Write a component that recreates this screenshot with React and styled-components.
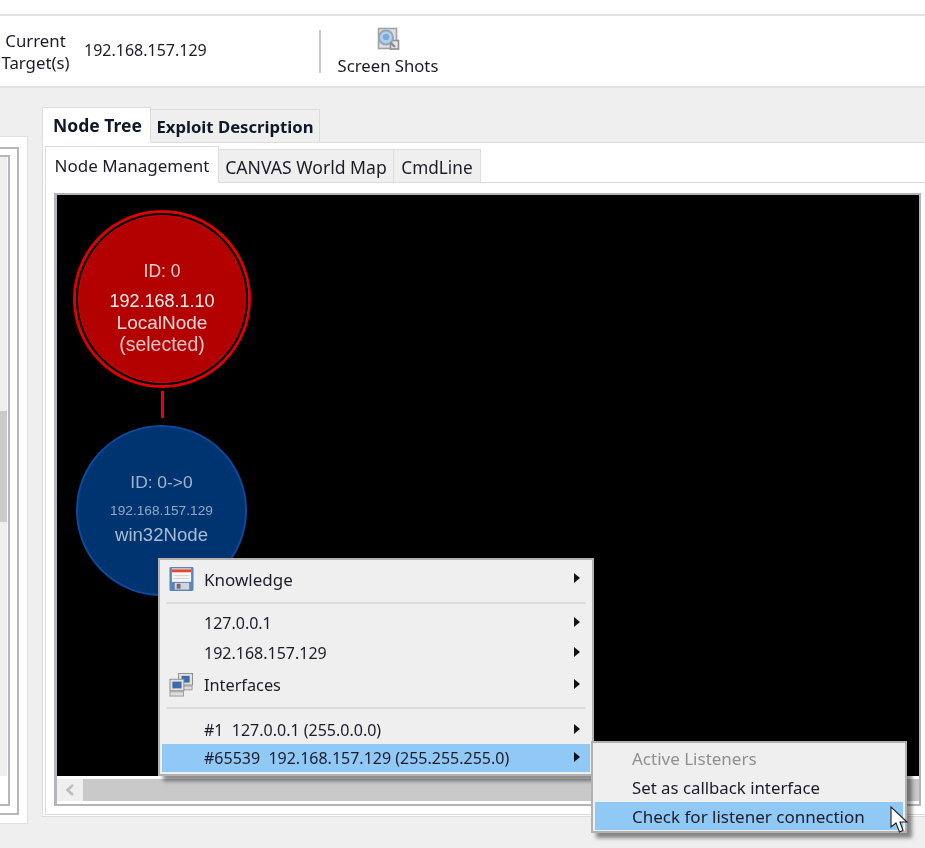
import styled, { createGlobalStyle } from 'styled-components'

const Global = createGlobalStyle`
  html, body { margin: 0; padding: 0; background: #efefef; }
  body { width: 925px; height: 848px; overflow: hidden; font-family: "Noto Sans", "Open Sans", sans-serif; color: #1c1c2a; }
`

const Page = styled.div`
  position: relative;
  width: 925px;
  height: 848px;
  overflow: hidden;
  background: #efefef;
  filter: blur(0.45px);
`
const TopStrip = styled.div`
  height: 14px;
  background: #fff;
  border-bottom: 2px solid #e3e3e3;
`
const Toolbar = styled.div`
  height: 70px;
  background: #fff;
  border-bottom: 2px solid #e3e3e3;
  display: flex;
  align-items: center;
  font-size: 16px;
`
const TargetLabel = styled.div`
  width: 71px;
  text-align: center;
  line-height: 22px;
  font-size: 16.8px;
  padding-top: 2px;
`
const TargetValue = styled.div`
  margin-left: 13px;
  width: 235px;
  margin-top: -2px;
`
const Divider = styled.div`
  width: 2px;
  height: 43px;
  background: #c9c9c9;
  margin-top: 1px;
`
const ToolButton = styled.div`
  margin-left: 15px;
  width: 104px;
  display: flex;
  flex-direction: column;
  align-items: center;
  gap: 3px;
  font-size: 16.7px;
  line-height: 24px;
  margin-top: 2px;
`
const Body = styled.div`
  display: flex;
  padding-top: 19px;
`
const LeftPanel = styled.div`
  box-sizing: border-box;
  flex-shrink: 0;
  width: 28px;
  height: 688px;
  margin-top: 29px;
  background: #fff;
  border: 1px solid #dfdfdf;
  border-left: 0;
  padding: 10px 8px 8px 0;
  display: flex;
`
const LeftBox = styled.div`
  flex: 1;
  display: flex;
  border: 2px solid #b7b7bd;
  border-left: 0;
  padding: ${p => p.$pad};
`
const SideScroll = styled.div`
  flex: 1;
  display: flex;
  flex-direction: column;
  background: #fff;
`
const SideTrack = styled.div`
  height: 619px;
  background: #efefef;
  padding-top: 254px;
  box-sizing: border-box;
`
const SideThumb = styled.div`
  height: 111px;
  background: #cacaca;
`
const RightPanel = styled.div`
  margin-left: 14px;
  width: 900px;
  flex-shrink: 0;
`
const MainTabs = styled.div`
  display: flex;
  align-items: flex-end;
  height: 36px;
  margin-bottom: -1px;
  position: relative;
`
const MainTab = styled.div`
  box-sizing: border-box;
  height: ${p => (p.$active ? 36 : 34)}px;
  width: ${p => p.$w}px;
  background: ${p => (p.$active ? '#fff' : '#efefef')};
  border: 1px solid #dcdcdc;
  border-bottom: ${p => (p.$active ? '1px solid #fff' : '1px solid #dcdcdc')};
  margin-right: -1px;
  position: relative;
  z-index: ${p => (p.$active ? 1 : 0)};
  display: flex;
  align-items: center;
  justify-content: center;
  padding-left: ${p => (p.$active ? 2 : 0)}px;
  font-size: ${p => p.$size}px;
  font-weight: 700;
  color: #101828;
`
const TabBody = styled.div`
  box-sizing: border-box;
  height: 675px;
  background: #fff;
  border: 1px solid #dcdcdc;
  padding: 3px 0 2px 2px;
`
const SubTabs = styled.div`
  display: flex;
  align-items: flex-end;
  height: 37px;
  margin-bottom: -1px;
  position: relative;
`
const SubTab = styled.div`
  box-sizing: border-box;
  height: ${p => (p.$active ? 37 : 34)}px;
  width: ${p => p.$w}px;
  background: ${p => (p.$active ? '#fff' : '#efefef')};
  border: 1px solid #dcdcdc;
  border-bottom: ${p => (p.$active ? '1px solid #fff' : '1px solid #dcdcdc')};
  margin-right: -1px;
  position: relative;
  z-index: ${p => (p.$active ? 1 : 0)};
  display: flex;
  align-items: center;
  justify-content: center;
  padding-top: 2px;
  font-size: ${p => p.$size}px;
`
const SubBody = styled.div`
  box-sizing: border-box;
  height: 633px;
  border: 1px solid #dcdcdc;
  padding: 10px 0 8px 8px;
`
const Frame = styled.div`
  box-sizing: border-box;
  width: 867px;
  height: 613px;
  border: 2px solid #b4b4bc;
  border-left-width: 3px;
  padding-bottom: 3px;
  background: #fff;
  display: flex;
  flex-direction: column;
`
const Canvas = styled.div`
  position: relative;
  height: 581px;
  background: #000;
  flex-shrink: 0;
`
const HScroll = styled.div`
  display: flex;
  margin-top: 3px;
  height: 22px;
`
const ScrollButton = styled.div`
  width: 26px;
  background: #efefef;
  display: flex;
  align-items: center;
  justify-content: center;
`
const ScrollTrack = styled.div`
  flex: 1;
  background: #c9c9c9;
`
const Node = styled.div`
  position: absolute;
  box-sizing: border-box;
  left: ${p => p.$x}px;
  top: ${p => p.$y}px;
  width: ${p => p.$d}px;
  height: ${p => p.$d}px;
  border-radius: 50%;
  background: ${p => p.$bg};
  border: ${p => p.$rw}px solid ${p => p.$ring};
  display: flex;
  flex-direction: column;
  align-items: center;
  font-family: "Liberation Sans", Arial, sans-serif;
  text-align: center;
`
const SelectedRing = styled.div`
  flex: 1;
  align-self: stretch;
  border-radius: 50%;
  border: 2px solid #000;
  display: flex;
  flex-direction: column;
  align-items: center;
`
const RingInner = styled.div`
  flex: 1;
  align-self: stretch;
  border-radius: 50%;
  border: 1px solid #d40000;
  background: #b30000;
  display: flex;
  flex-direction: column;
  align-items: center;
  padding-top: ${p => p.$top}px;
`
const NodeLine = styled.div`
  font-size: ${p => p.$size}px;
  line-height: ${p => p.$lh}px;
  margin-top: ${p => p.$mt || 0}px;
  color: ${p => p.$color};
  white-space: nowrap;
`
const Link = styled.div`
  position: absolute;
  left: 104px;
  top: 196px;
  width: 3px;
  height: 27px;
  background: #f00000;
`
const Menu = styled.div`
  position: absolute;
  box-sizing: border-box;
  left: ${p => p.$x}px;
  top: ${p => p.$y}px;
  width: ${p => p.$w}px;
  height: ${p => p.$h}px;
  background: #efefef;
  border: 2px solid #b2b2b2;
  box-shadow: 5px 5px 4px rgba(0, 0, 0, 0.45);
  padding: ${p => p.$pad};
  z-index: ${p => p.$z};
`
const Item = styled.div`
  position: relative;
  height: ${p => p.$h}px;
  padding-left: ${p => p.$left}px;
  display: flex;
  align-items: center;
  font-size: ${p => p.$size || 16}px;
  background: ${p => (p.$active ? '#90c8f6' : 'transparent')};
  color: ${p => (p.$muted ? '#8f8f8f' : '#1c1c2a')};
  white-space: pre;
`
const Arrow = styled.span`
  position: absolute;
  right: 10px;
  top: 50%;
  margin-top: -6px;
  width: 0;
  height: 0;
  border-left: 6px solid #111;
  border-top: 5.5px solid transparent;
  border-bottom: 5.5px solid transparent;
`
const ItemIcon = styled.span`
  position: absolute;
  left: 7px;
  top: 50%;
  transform: translateY(-50%);
  display: flex;
`
const Sep = styled.div`
  height: 2px;
  background: #dcdcdc;
  margin: ${p => p.$top}px 4px ${p => p.$bottom}px;
`
const Pointer = styled.svg`
  position: absolute;
  left: 890px;
  top: 806px;
  z-index: 5;
`

function ScreenShotIcon() {
  return (
    <svg width="24" height="24" viewBox="0 0 24 24">
      <rect x="2.5" y="1.5" width="18" height="20" fill="#dcdee2" stroke="#a2a2a2" strokeWidth="1.6" />
      <rect x="14.5" y="13.5" width="8" height="8.5" fill="#e6e6e6" stroke="#909090" strokeWidth="1.6" />
      <circle cx="10" cy="10.5" r="7" fill="#b4cfe9" stroke="#98a6b4" strokeWidth="2" />
      <circle cx="10" cy="10" r="3.2" fill="#78a8dc" />
      <path d="M14.5 15.5 L19 20" stroke="#868c94" strokeWidth="2.4" />
    </svg>
  )
}

function FloppyIcon() {
  return (
    <svg width="25" height="25" viewBox="0 0 26 26">
      <rect x="0.5" y="0.5" width="25" height="25" rx="1.5" fill="#5b84bd" />
      <rect x="3" y="2" width="20" height="14" fill="#f5f5f5" />
      <rect x="3" y="3" width="20" height="3" fill="#e8452f" />
      <rect x="5" y="9" width="16" height="1" fill="#cfcfcf" />
      <rect x="5" y="12" width="16" height="1" fill="#cfcfcf" />
      <rect x="6" y="17" width="15" height="7" fill="#d4d4d4" />
      <rect x="8" y="18" width="4" height="5" fill="#6c6c6c" />
    </svg>
  )
}

function NetworkIcon() {
  return (
    <svg width="25" height="25" viewBox="0 0 26 26">
      <rect x="10" y="1" width="14.5" height="12" fill="#e2e2e2" stroke="#8b8b8b" />
      <rect x="13" y="3.5" width="8.5" height="7" fill="#3e6aa5" />
      <rect x="11" y="14" width="13" height="4" fill="#dcdcdc" stroke="#9a9a9a" />
      <rect x="1" y="7" width="14.5" height="12" fill="#e2e2e2" stroke="#8b8b8b" />
      <rect x="3.5" y="9.5" width="9.5" height="7" fill="#3e6aa5" />
      <rect x="1" y="20" width="14" height="4.5" fill="#dcdcdc" stroke="#9a9a9a" />
    </svg>
  )
}

function App() {
  return (
    <Page>
      <Global />
      <TopStrip />
      <Toolbar>
        <TargetLabel>Current<br />Target(s)</TargetLabel>
        <TargetValue>192.168.157.129</TargetValue>
        <Divider />
        <ToolButton>
          <ScreenShotIcon />
          <span>Screen Shots</span>
        </ToolButton>
      </Toolbar>
      <Body>
        <LeftPanel>
          <LeftBox $pad="6px 7px 7px 0">
            <LeftBox $pad="0 1px 0 0">
              <SideScroll>
                <SideTrack><SideThumb /></SideTrack>
              </SideScroll>
            </LeftBox>
          </LeftBox>
        </LeftPanel>
        <RightPanel>
          <MainTabs>
            <MainTab $active $w={109} $size={17.5}>Node Tree</MainTab>
            <MainTab $w={170} $size={16.7}>Exploit Description</MainTab>
          </MainTabs>
          <TabBody>
            <SubTabs>
              <SubTab $active $w={174} $size={17}>Node Management</SubTab>
              <SubTab $w={176} $size={17.6}>CANVAS World Map</SubTab>
              <SubTab $w={88} $size={17.2}>CmdLine</SubTab>
            </SubTabs>
            <SubBody>
              <Frame>
                <Canvas>
                  <Node $x={16} $y={15} $d={178} $bg="#000" $ring="#e00000" $rw={3}>
                    <SelectedRing>
                      <RingInner $top={44}>
                        <NodeLine $size={17.5} $lh={22} $color="#ecd0d0">ID: 0</NodeLine>
                        <NodeLine $size={18} $lh={22} $mt={8} $color="#fbeeee">192.168.1.10</NodeLine>
                        <NodeLine $size={19} $lh={22} $color="#f0d8d8">LocalNode</NodeLine>
                        <NodeLine $size={19.5} $lh={21} $color="#e6c4c4">(selected)</NodeLine>
                      </RingInner>
                    </SelectedRing>
                  </Node>
                  <Link />
                  <Node $x={19} $y={230} $d={171} $bg="#003470" $ring="#0b4a9c" $rw={2}>
                    <NodeLine $size={17.4} $lh={22} $mt={44} $color="#9fb4cc">ID: 0-&gt;0</NodeLine>
                    <NodeLine $size={13.7} $lh={16} $mt={10} $color="#8fa8c6">192.168.157.129</NodeLine>
                    <NodeLine $size={18.6} $lh={22} $mt={5} $color="#a9bdd4">win32Node</NodeLine>
                  </Node>
                </Canvas>
                <HScroll>
                  <ScrollButton>
                    <svg width="12" height="14" viewBox="0 0 12 14">
                      <path d="M9 2 L3.5 7 L9 12" fill="none" stroke="#bdbdbd" strokeWidth="2.6" />
                    </svg>
                  </ScrollButton>
                  <ScrollTrack />
                </HScroll>
              </Frame>
            </SubBody>
          </TabBody>
        </RightPanel>
      </Body>

      <Menu $x={158} $y={558} $w={436} $h={218} $pad="0 2px" $z={2}>
        <Item $h={38} $left={42} $size={17}>
          <ItemIcon><FloppyIcon /></ItemIcon>Knowledge<Arrow />
        </Item>
        <Sep $top={4} $bottom={4} />
        <Item $h={30} $left={42}>127.0.0.1<Arrow /></Item>
        <Item $h={30} $left={42}>192.168.157.129<Arrow /></Item>
        <Item $h={34} $left={42} $size={16.3}>
          <ItemIcon><NetworkIcon /></ItemIcon>Interfaces<Arrow />
        </Item>
        <Sep $top={5} $bottom={6} />
        <Item $h={29} $left={42}>#1  127.0.0.1 (255.0.0.0)<Arrow /></Item>
        <Item $h={28} $left={42} $active>#65539  192.168.157.129 (255.255.255.0)<Arrow /></Item>
      </Menu>

      <Menu $x={591} $y={741} $w={316} $h={92} $pad="1px 2px" $z={3}>
        <Item $h={29} $left={37} $muted $size={17}>Active Listeners</Item>
        <Item $h={29} $left={37} $size={16.8}>Set as callback interface</Item>
        <Item $h={28} $left={37} $size={17} $active>Check for listener connection</Item>
      </Menu>

      <Pointer width="19" height="28" viewBox="0 0 19 28">
        <path d="M1 1 L1 21 L6 17 L9.5 26 L13 24.5 L10 16 L17 16 Z" fill="#fff" stroke="#222" strokeWidth="1.1" />
      </Pointer>
    </Page>
  )
}

export default App
